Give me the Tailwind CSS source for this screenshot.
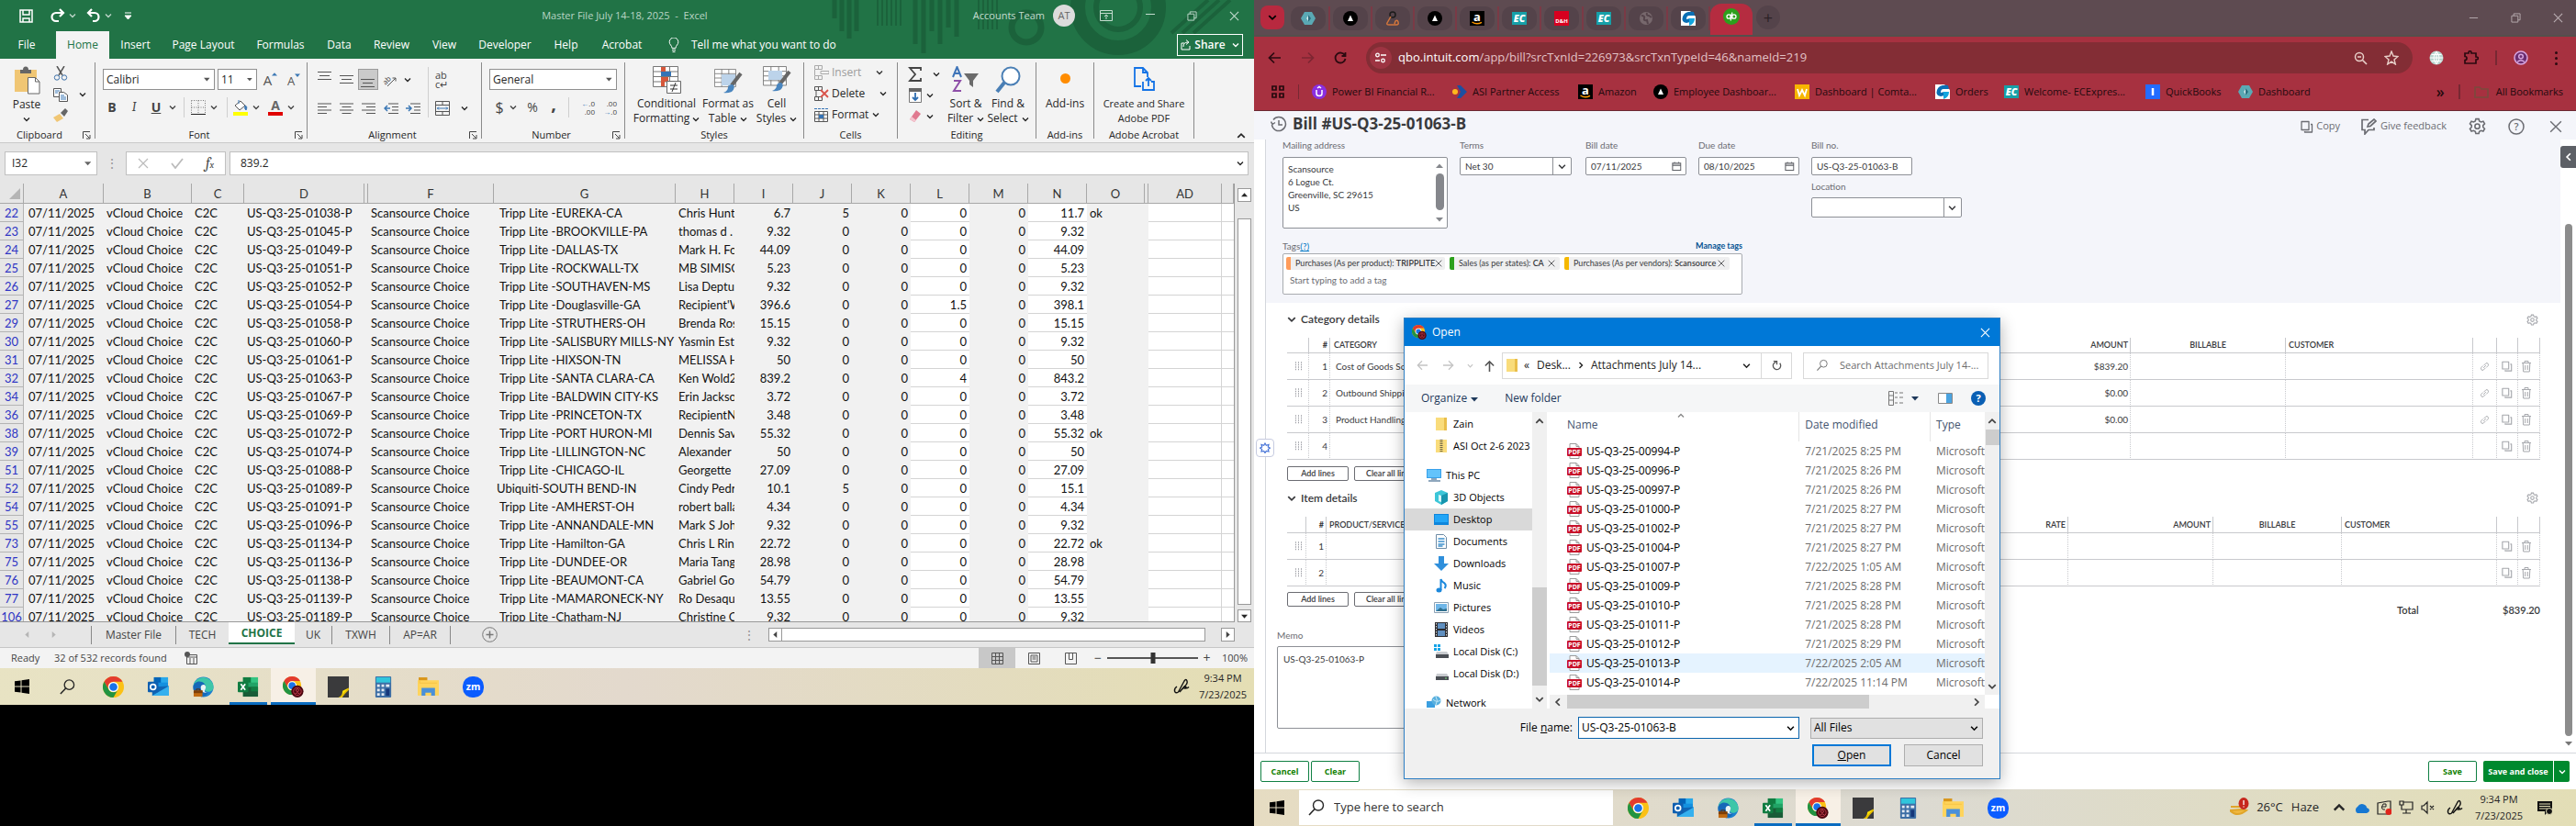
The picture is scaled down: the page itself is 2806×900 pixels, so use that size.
<!DOCTYPE html>
<html lang="en">
<head>
<meta charset="utf-8">
<title>Workspace</title>
<script src="https://cdn.jsdelivr.net/npm/@tailwindcss/browser@4"></script>
</head>
<body class="bg-black font-['Open_Sans',sans-serif] text-xs text-[#262626]">

<!-- Shared icon definitions -->
<svg class="hidden" aria-hidden="true">
  <symbol id="chev" viewBox="0 0 8 8"><path d="M1 2.5 4 5.5 7 2.5" fill="none" stroke="currentColor" stroke-width="1.4"/></symbol>
  <symbol id="tri" viewBox="0 0 8 8"><path d="M0 2h8L4 6.500z" fill="currentColor"/></symbol>
  <symbol id="x" viewBox="0 0 12 12"><path d="M1 1l10 10M11 1 1 11" fill="none" stroke="currentColor" stroke-width="1.2"/></symbol>
  <symbol id="launch" viewBox="0 0 9 9"><path d="M.5 8V.5H8M3 3l4.500 4.500M8 4v4H4" fill="none" stroke="#444"/></symbol>
  <symbol id="restore" viewBox="0 0 12 12"><path d="M1 3.500h7.500V11H1zM3.500 3.500V1H11v7.500H8.500" fill="none" stroke="currentColor"/></symbol>
  <symbol id="glass" viewBox="0 0 20 20"><circle cx="12" cy="7.500" r="5.500" fill="none" stroke="currentColor" stroke-width="1.400"/><path d="M8 11.500 2 18" stroke="currentColor" stroke-width="1.600"/></symbol>
  <symbol id="gear" viewBox="0 0 24 24"><path d="M10 2h4l.8 3 2.300 1.200 3-.9 2 3.400-2.200 2.200v2.400l2.200 2.200-2 3.400-3-.9-2.300 1.200-.8 3h-4l-.8-3-2.300-1.200-3 .9-2-3.400 2.200-2.200v-2.400L1.900 8.700l2-3.400 3 .9L9.200 5z" fill="none" stroke="currentColor" stroke-width="2"/><circle cx="12" cy="12.200" r="3.300" fill="none" stroke="currentColor" stroke-width="2"/></symbol>
  <symbol id="copy" viewBox="0 0 14 14"><path d="M1 1.500h8v9H1zM11 4.500h1.500v8.500H4.500v-1" fill="none" stroke="currentColor" stroke-width="1.300" stroke-linejoin="round"/></symbol>
  <symbol id="trash" viewBox="0 0 12 14"><path d="M1 3.500h10M4 3V1.500h4V3M2.200 4l.5 9h6.600l.5-9M4.700 6v5M7.300 6v5" fill="none" stroke="currentColor"/></symbol>
  <symbol id="link" viewBox="0 0 12 12"><path d="M5 4.500 7.500 2a2 2 0 0 1 2.700 2.700L8 7M7 7.500 4.500 10a2 2 0 0 1-2.700-2.700L4 5M4.500 7.500l3-3" fill="none" stroke="currentColor"/></symbol>
  <symbol id="dots" viewBox="0 0 9 10"><path d="M1 1h1M4 1h1M7 1h1M1 3.500h1M4 3.500h1M7 3.500h1M1 6h1M4 6h1M7 6h1M1 8.500h1M4 8.500h1M7 8.500h1" stroke="#9b9ca3" stroke-width="1.300"/></symbol>
  <symbol id="cal" viewBox="0 0 12 12"><path d="M1 2.500h10V11H1zM1 5h10M3.500 1v2M8.500 1v2" fill="none" stroke="#5f6167" stroke-width="1.200"/></symbol>
  <symbol id="win" viewBox="0 0 16 16"><path d="M0 2.300 6.500 1.400v6.100H0zM7.500 1.300 16 0v7.500H7.500zM0 8.500h6.500v6.100L0 13.700zM7.500 8.500H16V16l-8.500-1.200z" fill="#000"/></symbol>
  <symbol id="chrome" viewBox="0 0 24 24"><circle cx="12" cy="12" r="12" fill="#fbc116"/><path d="M12 0A12 12 0 0 0 1.600 6l5.200 9A6 6 0 0 1 12 6h10.400A12 12 0 0 0 12 0z" fill="#e33b2e"/><path d="M1.600 6A12 12 0 0 0 12 24l5.200-9A6 6 0 0 1 6.800 15z" fill="#229342"/><circle cx="12" cy="12" r="5.800" fill="#fff"/><circle cx="12" cy="12" r="4.500" fill="#1a73e8"/></symbol>
  <symbol id="chrome2" viewBox="0 0 26 26"><use href="#chrome" width="23" height="23"/><circle cx="18" cy="18.500" r="7.500" fill="#4d0710"/><circle cx="18" cy="18.500" r="4.800" fill="none" stroke="#c5404e"/><circle cx="18" cy="17" r="1.700" fill="none" stroke="#c5404e"/><path d="M15 21.500q3-3 6 0" fill="none" stroke="#c5404e"/></symbol>
  <symbol id="outlook" viewBox="0 0 24 24"><path d="M7 1h16v12H7z" fill="#1490df"/><path d="M7 1h8v6H7z" fill="#0364b8"/><path d="M15 1h8v6h-8z" fill="#28a8ea"/><path d="M5 12l19-1v11H5z" fill="#1066b5"/><path d="M5 22 24 11v11z" fill="#35b0ee"/><rect y="6" width="12" height="12" rx="1" fill="#0f5fb0"/><circle cx="6" cy="12" r="3" fill="none" stroke="#fff" stroke-width="1.800"/></symbol>
  <symbol id="edge" viewBox="0 0 24 24"><circle cx="12" cy="12" r="11.500" fill="#1b7fd0"/><path d="M.6 11A11.500 11.500 0 0 1 23.500 12c0 4-3 5.500-6 5.500-2.500 0-4-1-3.500-2 2-3 0-6-4-6-4 0-8 1-9.400 1.500z" fill="#3ec6a8"/><path d="M.6 11C3 4 10 5 13 8c2 2 2 5 .5 7-1 2 1 3 4 3-2 4-6 5.500-9 5C3 21.500 0 17 .6 11z" fill="#1668b8"/><path d="M9 12q1-3 4-2.500 3 2 1 5.500-2 3 3 3l-3 .5Q9 18 9 12z" fill="#eaf4f4"/><path d="M1 16h10v7H1z" fill="#c06a12"/><path d="M1 16h10v3H1z" fill="#7d3f08"/><path d="M4 16v-1.500h4V16" fill="none" stroke="#5c2c04"/></symbol>
  <symbol id="excel" viewBox="0 0 24 24"><path d="M6 1h17v22H6z" fill="#21a366"/><path d="M6 1h9v6H6z" fill="#107c41"/><path d="M15 1h8v6h-8z" fill="#33c481"/><path d="M6 12h17v11H6z" fill="#185c37"/><path d="M15 12h8v5h-8z" fill="#107c41"/><rect y="6" width="12" height="12" rx="1" fill="#107c41"/><path d="M3.500 8.500l5 7M8.500 8.500l-5 7" stroke="#fff" stroke-width="1.800"/></symbol>
  <symbol id="notes" viewBox="0 0 22 22"><path d="M0 0h22v22H0z" fill="#3a3a3c"/><path d="M11 22q4-1 4.500-7Q18 14 22 12l-7 10z" fill="#ffe100"/><path d="M12 22l10-10v2l-8 8z" fill="#e0b800"/></symbol>
  <symbol id="calc" viewBox="0 0 18 24"><rect width="18" height="24" rx="1" fill="#3d6ea5"/><path d="M1 1h16v6H1z" fill="#30c5dc"/><path d="M2 9h3v3H2zM7 9h3v3H7zM12 9h4v3h-4zM2 14h3v3H2zM7 14h3v3H7zM2 19h3v3H2zM7 19h3v3H7z" fill="#e4eaf2"/><path d="M12 14h4v8h-4z" fill="#16377a"/></symbol>
  <symbol id="folder" viewBox="0 0 22 20"><path d="M1 0h9v4H1z" fill="#d9961a"/><path d="M0 3h22v16H0z" fill="#ffd45c"/><path d="M4 19v-8h14v8h-4v-3H8v3z" fill="#4a90d9"/><path d="M2 3v3h18" fill="none" stroke="#f6c445"/></symbol>
  <symbol id="zoomapp" viewBox="0 0 24 24"><rect width="24" height="24" rx="11" fill="#0b5cff"/><text x="12" y="16" text-anchor="middle" font-family="Open Sans" font-weight="700" font-size="11" fill="#fff">zm</text></symbol>
  <symbol id="pen" viewBox="0 0 18 18"><path d="M4 9q-3 2-2.500 5 1 3 4 1L12 3q2-3 3 0t-3 6l-5 6q4-5 6-6 2 0 0 2 3 0 4-1.500" fill="none" stroke="#111" stroke-width="1.400"/></symbol>
  <symbol id="amazon" viewBox="0 0 16 16"><path d="M0 0h16v16H0z" fill="#000"/><text x="8" y="11" text-anchor="middle" font-family="Open Sans" font-weight="700" font-size="13" fill="#fff">a</text><path d="M2.500 12q5 3.500 10.500.3" fill="none" stroke="#f90" stroke-width="1.400"/></symbol>
  <symbol id="ec" viewBox="0 0 16 16"><path d="M0 1h16v14H0z" fill="#16a0a8"/><text x="8" y="12" text-anchor="middle" font-family="Open Sans" font-style="italic" font-weight="800" font-size="10.500" fill="#fff">EC</text></symbol>
  <symbol id="tridisc" viewBox="0 0 16 16"><circle cx="8" cy="8" r="8" fill="#000"/><path d="M8 4.500l3 6.500H5z" fill="#fff"/></symbol>
  <symbol id="hex" viewBox="0 0 16 16"><path d="M4 1h8l4 7-4 7H4L0 8z" fill="#5aa9b4"/><path d="M8.500 4.500 11 8l-2.500 3.500L6 8z" fill="#2b6f80"/><path d="M8 5v6L6 8z" fill="#d5eef0"/></symbol>
  <symbol id="gg" viewBox="0 0 16 16"><path d="M0 0h10l6 6v10H0z" fill="#fff"/><path d="M14 1Q4 0 2 6t4 7l4-1V8l-4 1q0-4 3-4h6z" fill="#0a6fb5"/><path d="M9 8h6q0 6-6 8z" fill="#12a5df"/></symbol>
  <symbol id="pdf" viewBox="0 0 16 17"><path d="M3 .5h7l3 3v13H3z" fill="#fff" stroke="#9a9a9a"/><path d="M10 .5v3h3" fill="none" stroke="#9a9a9a"/><rect y="5" width="16" height="9" rx="1" fill="#c8102a"/><text x="8" y="12.300" text-anchor="middle" font-family="Open Sans" font-weight="700" font-size="7" fill="#fff">PDF</text></symbol>
  <symbol id="fold" viewBox="0 0 14 16"><path d="M1 1h12v14H1z" fill="#f9dc7b"/><path d="M10 1h3v14h-3z" fill="#e9be4b"/></symbol>
  <symbol id="zip" viewBox="0 0 14 16"><path d="M1 1h12v14H1z" fill="#f9dc7b"/><path d="M7 1v14" stroke="#6b6244" stroke-width="3" stroke-dasharray="1 1"/></symbol>
  <symbol id="pc" viewBox="0 0 16 16"><path d="M0 1h16v10H0z" fill="#38a1ea"/><path d="M1 2h14v8H1z" fill="#63c3fb"/><path d="M2 14h13M5 12h6" stroke="#6b8ba8" stroke-width="1.500"/></symbol>
  <symbol id="cube" viewBox="0 0 16 16"><path d="M8 0l7 3v9l-7 4-7-4V3z" fill="#3cc6d8"/><path d="M8 6l7-3v9l-7 4z" fill="#1795ae"/><path d="M5 5l3 1v7l-3-1z" fill="#d9f5f8"/></symbol>
  <symbol id="desk" viewBox="0 0 16 16"><path d="M0 2h16v12H0z" fill="#0f86dc"/><path d="M1 3h14v8H1z" fill="#23a6f7"/></symbol>
  <symbol id="doc" viewBox="0 0 16 16"><path d="M2.500.5h8l3 3v12h-11z" fill="#fff" stroke="#6d8ba5"/><path d="M4.500 5h7M4.500 8h7M4.500 11h7M4.500 13h5" stroke="#3b8fcc" stroke-width="1.400"/></symbol>
  <symbol id="down" viewBox="0 0 16 16"><path d="M5 0h6v8h5l-8 8-8-8h5z" fill="#2f8fdb"/></symbol>
  <symbol id="note" viewBox="0 0 16 16"><path d="M7.500 13V1q1 3 4 4.500Q14 8 11.500 11" fill="none" stroke="#1b88dc" stroke-width="2"/><ellipse cx="5.500" cy="13" rx="3" ry="2.500" fill="#1b88dc"/></symbol>
  <symbol id="pic" viewBox="0 0 16 16"><path d="M.5 2.500h15v11H.5z" fill="#fff" stroke="#8aa0b4"/><path d="M2 4h12v8H2z" fill="#6fb6e8"/><path d="M2 12l5-4 3 2 4-1v3z" fill="#2e6f8e"/></symbol>
  <symbol id="film" viewBox="0 0 16 16"><path d="M1 0h14v16H1z" fill="#2b2b2f"/><path d="M4 1h8v6H4zM4 9h8v6H4z" fill="#5f8fc0"/><path d="M2.500 1v15M13.500 1v15" stroke="#ddd" stroke-dasharray="1.500 1.500"/></symbol>
  <symbol id="disk" viewBox="0 0 16 16"><path d="M3 8h11l2 3H2z" fill="#c9ccd0"/><path d="M2 11h14v4H2z" fill="#4b4f55"/><path d="M12 13h2" stroke="#7ee07e"/></symbol>
  <symbol id="diskc" viewBox="0 0 16 16"><path d="M0 0h3v3H0zM4 0h3v3H4zM0 4h3v3H0zM4 4h3v3H4z" fill="#16a4e8"/><path d="M3 8h11l2 3H2z" fill="#c9ccd0"/><path d="M2 11h14v4H2z" fill="#4b4f55"/></symbol>
  <symbol id="net" viewBox="0 0 16 16"><path d="M0 6h9v7H0z" fill="#3b9fe0"/><circle cx="10.500" cy="5.500" r="5" fill="#5ab0de"/><path d="M7 4q4 4 8 1M10 1q3 4 0 9" fill="none" stroke="#bfe6f7"/><path d="M2 15h6" stroke="#577"/></symbol>
  <symbol id="lines-l" viewBox="0 0 16 12"><path d="M0 1h15M0 4.500h10M0 8h15M0 11.500h10" stroke="#555"/></symbol>
  <symbol id="lines-c" viewBox="0 0 16 12"><path d="M0 1h15M2.500 4.500h10M0 8h15M2.500 11.500h10" stroke="#555"/></symbol>
  <symbol id="lines-r" viewBox="0 0 16 12"><path d="M0 1h15M5 4.500h10M0 8h15M5 11.500h10" stroke="#555"/></symbol>
  <symbol id="lines3" viewBox="0 0 16 12"><path d="M0 1.500h15M2 5.500h11M0 9.500h15" stroke="#555"/></symbol>
  <symbol id="grid" viewBox="0 0 28 30"><path d="M.5.5h27v22H.5zM.5 6h27M.5 11.500h27M.5 17h27M9.500.5v22M18.500.5v22" fill="#fff" stroke="#777"/></symbol>
</svg>

<div class="grid min-h-screen grid-cols-[1366fr_1440fr]">

<!-- ============ Spreadsheet ============ -->
<section class="flex min-w-0 flex-col bg-black" aria-label="Spreadsheet">
  <header class="relative bg-[#217346] text-white">
    <svg class="absolute top-0 right-0 h-16 w-[460px] text-[#1b623b]" viewBox="0 0 460 64" aria-hidden="true"><g fill="none" stroke="currentColor"><path stroke-width="5" d="M3 0v20M11 0v34M19 0v42M27 0v34M91 0v48M100 0v58M109 0v34M118 0v48M127 0v30M136 0v40"/><path stroke-width="2" d="M50 0v28M55 0v28M60 0v28M65 0v28M70 0v28M75 0v28M160 0v32M165 0v32M170 0v32M175 0v32M180 0v32"/><circle cx="212" cy="30" r="16" stroke-width="7"/><circle cx="312" cy="8" r="44" stroke-width="16"/><circle cx="312" cy="8" r="24" stroke-width="6"/><path stroke-width="4" d="M370 36 410 0M382 36 422 0M394 36 434 0"/></g></svg>
    <div class="relative flex h-[34px] items-center pr-4 pl-[21px]">
      <div class="flex w-[130px] items-center">
        <button aria-label="Save" class="w-[28px]"><svg class="size-[15px]" viewBox="0 0 15 15"><path d="M1 1h13v13H1z" fill="none" stroke="#fff" stroke-width="1.500"/><path d="M4 1v5h7V1M4 14v-4h7v4" fill="none" stroke="#fff" stroke-width="1.500"/></svg></button>
        <button aria-label="Redo" class="w-[39px] whitespace-nowrap"><svg class="inline size-4" viewBox="0 0 16 16"><path d="M10 1l4 4-4 4M14 5H6a4 4 0 0 0 0 9h3" fill="none" stroke="#fff" stroke-width="2.200"/></svg><svg class="ml-1 inline size-2 opacity-70"><use href="#chev"/></svg></button>
        <button aria-label="Undo" class="w-[39px] whitespace-nowrap"><svg class="inline size-4" viewBox="0 0 16 16"><path d="M6 1 2 5l4 4M2 5h7a4 4 0 0 1 0 9H7" fill="none" stroke="#fff" stroke-width="2.200"/></svg><svg class="ml-1 inline size-2 opacity-70"><use href="#chev"/></svg></button>
        <button aria-label="Customize toolbar" class="ml-2 w-4"><svg class="size-[9px]" viewBox="0 0 9 9"><path d="M1 1h7M1 4h7L4.500 8z" fill="#fff" stroke="#fff"/></svg></button>
      </div>
      <p class="flex-1 pl-[150px] text-center text-[11px] whitespace-pre text-[#b9d5c5]">Master File July 14-18, 2025  -  Excel</p>
      <div class="flex items-center text-[#c4dccf]">
        <span class="text-[11px]">Accounts Team</span>
        <span class="ml-[9px] flex size-6 items-center justify-center rounded-full bg-[#dcdcdc] text-[11px] text-[#666]">AT</span>
        <button aria-label="Ribbon options" class="ml-[27px]"><svg class="h-3 w-[14px]" viewBox="0 0 14 12"><path d="M.5.5h13v11H.5zM.5 3.500h13M7 10V5M5 7l2-2 2 2" fill="none" stroke="currentColor"/></svg></button>
        <button aria-label="Minimize" class="ml-[35px]"><svg class="size-3" viewBox="0 0 12 12"><path d="M1 4.500h10" stroke="currentColor"/></svg></button>
        <button aria-label="Restore" class="ml-[34px]"><svg class="size-[11px]"><use href="#restore"/></svg></button>
        <button aria-label="Close" class="ml-[35px]"><svg class="size-[11px]"><use href="#x"/></svg></button>
      </div>
    </div>
    <nav class="relative flex h-[30px] items-stretch pr-3 text-xs" aria-label="Ribbon tabs">
      <button class="w-[61px] pr-[3px]">File</button>
      <button class="w-[58px] bg-[#f3f3f3] text-[#217346]">Home</button>
      <button class="w-[57px]">Insert</button>
      <button class="w-[91px]">Page Layout</button>
      <button class="w-[77px]">Formulas</button>
      <button class="w-[51px]">Data</button>
      <button class="w-[63px]">Review</button>
      <button class="w-[52px]">View</button>
      <button class="w-[80px]">Developer</button>
      <button class="w-[53px]">Help</button>
      <button class="w-[69px]">Acrobat</button>
      <button class="flex items-center pl-4"><svg class="mr-[13px] h-4 w-3" viewBox="0 0 12 16"><path d="M4 11.500q0-2-1.500-3.500a4.800 4.800 0 1 1 7 0Q8 9.500 8 11.500zM4 13.500h4M4.500 15.500h3" fill="none" stroke="#fff"/></svg>Tell me what you want to do</button>
      <button class="my-[3px] ml-auto flex w-[72px] items-center justify-center gap-[3px] border border-white font-semibold"><svg class="size-3" viewBox="0 0 12 12"><path d="M4 4H1v7h9V7M3 8q0-5 5-5M6 .5 9 3 6 5.500" fill="none" stroke="#fff"/></svg>Share<svg class="ml-1 size-2"><use href="#chev"/></svg></button>
    </nav>
  </header>

  <!-- Ribbon -->
  <div class="flex h-[92px] border-b border-[#c9c9c9] bg-[#f3f3f3] leading-4">
    <div class="flex w-[103px] flex-col">
      <div class="flex h-[76px] items-start pt-2">
        <button class="flex w-[58px] flex-col items-center"><svg class="h-[31px] w-[29px]" viewBox="0 0 29 31"><path d="M1 4h24v24H1z" fill="#f0c674"/><path d="M7 4h3q0-3.500 3-3.500T16 4h3v4H7z" fill="#666"/><path d="M15.500 12.500h8l4.500 4.500v13H15.500z" fill="#fff" stroke="#666"/><path d="M23.500 12.500V17H28" fill="none" stroke="#666"/></svg><span class="mt-[3px]">Paste</span><svg class="mt-1 size-2"><use href="#chev"/></svg></button>
        <div class="flex flex-col gap-[7px]">
          <button aria-label="Cut"><svg class="size-4" viewBox="0 0 16 16"><path d="M4 0l6 10M12 0 6 10" stroke="#555" stroke-width="1.500"/><circle cx="4" cy="12.500" r="2.700" fill="none" stroke="#3c6fa8"/><circle cx="12" cy="12.500" r="2.700" fill="none" stroke="#3c6fa8"/></svg></button>
          <button aria-label="Copy" class="flex items-center gap-3"><svg class="size-4" viewBox="0 0 16 16"><path d="M.5 1.500h8v9h-8z" fill="#fff" stroke="#555"/><path d="M6.500 5.500h5l4 3v7h-9z" fill="#fff" stroke="#555"/><path d="M2 4h5M2 6h3M8 9h4M8 11h6M8 13h6" stroke="#3c78b5"/></svg><svg class="size-2"><use href="#chev"/></svg></button>
          <button aria-label="Format Painter"><svg class="size-4" viewBox="0 0 16 16"><path d="M0 10l7-4 4 5-7 4z" fill="#f0c674"/><path d="M8 5l5-5 3 3-4 6z" fill="#666"/></svg></button>
        </div>
      </div>
      <div class="flex items-center justify-between pr-1 pl-[18px] text-[11px]">Clipboard<svg class="size-[9px]"><use href="#launch"/></svg></div>
    </div>
    <div class="my-1 w-px bg-[#8a8a8a]"></div>

    <div class="flex w-[230px] flex-col">
      <div class="h-[76px] pt-[11px]">
        <div class="flex h-[23px] items-stretch pl-2">
          <label class="flex w-[122px] items-center border border-[#8f8f8f] bg-white pr-1"><input aria-label="Font" class="w-full min-w-0 pl-[3px] outline-none" value="Calibri"><svg class="size-[7px] text-[#555]"><use href="#tri"/></svg></label>
          <label class="ml-[3px] flex w-[43px] items-center border border-[#8f8f8f] bg-white pr-1"><input aria-label="Font size" class="w-full min-w-0 pl-[3px] outline-none" value="11"><svg class="size-[7px] text-[#555]"><use href="#tri"/></svg></label>
          <button aria-label="Grow font" class="ml-[2px] flex w-[25px] items-center justify-center text-[15px] text-[#555]">A<svg class="mb-3 size-[6px] rotate-180 text-[#3c78b5]"><use href="#tri"/></svg></button>
          <button aria-label="Shrink font" class="flex w-[26px] items-center justify-center pt-[2px] text-[13px] text-[#555]">A<svg class="mb-3 size-[6px] text-[#3c78b5]"><use href="#tri"/></svg></button>
        </div>
        <div class="mt-2 flex h-[22px] items-center pl-[6px] text-sm text-[#444]">
          <button class="w-6 font-bold">B</button><button class="w-6 font-serif italic">I</button><button class="w-6 font-bold underline">U</button>
          <svg class="mx-[2px] size-2"><use href="#chev"/></svg><span class="mx-[6px] h-full w-px bg-[#cfcfcf]"></span>
          <button aria-label="Borders"><svg class="ml-px size-4" viewBox="0 0 16 16"><path d="M.5.5v15M8 .5v15M15.500.5v15M.5.5h15M.5 8h15" stroke="#777" stroke-dasharray="1 1.500"/><path d="M0 15.500h16" stroke="#222"/></svg></button>
          <svg class="mx-[5px] size-2"><use href="#chev"/></svg><span class="mx-[5px] h-full w-px bg-[#cfcfcf]"></span>
          <button aria-label="Fill color"><svg class="h-[18px] w-[17px]" viewBox="0 0 17 18"><path d="M3 7l6-5 5 5-6 5z" fill="#fff" stroke="#555"/><path d="M7 5V1M14 7q3 1 1 5-2-1-1-5" fill="#3c78b5" stroke="#3c78b5"/><path d="M1 14h16v4H1z" fill="#ffff00"/></svg></button>
          <svg class="mx-[5px] size-2"><use href="#chev"/></svg>
          <button aria-label="Font color" class="ml-1 w-4 border-b-4 border-[#e00000] leading-[14px] font-bold text-[#666]">A</button>
          <svg class="mx-[5px] size-2"><use href="#chev"/></svg>
        </div>
      </div>
      <div class="flex items-center justify-between pr-1 text-[11px]"><span class="w-[9px]"></span>Font<svg class="size-[9px]"><use href="#launch"/></svg></div>
    </div>
    <div class="my-1 w-px bg-[#8a8a8a]"></div>

    <div class="flex w-[189px] flex-col">
      <div class="flex h-[76px] pt-[9px]">
        <div class="w-[131px]">
          <div class="flex h-[27px] items-center pl-[7px]">
            <button aria-label="Top align" class="w-6 pb-2 pl-1"><svg class="h-3 w-4"><use href="#lines3"/></svg></button>
            <button aria-label="Middle align" class="w-6 pl-1"><svg class="h-3 w-4"><use href="#lines3"/></svg></button>
            <button aria-label="Bottom align" class="h-[23px] w-[22px] border border-[#9a9a9a] bg-[#cacaca] pt-2 pl-[2px]"><svg class="h-3 w-4"><use href="#lines3"/></svg></button>
            <button aria-label="Orientation" class="w-6 pl-1"><svg class="size-4" viewBox="0 0 16 16"><text x="1" y="11" font-size="8" fill="#444" transform="rotate(-45 6 9)">ab</text><path d="M6 15 15 6M11.500 6H15v3.500" fill="none" stroke="#555"/></svg></button>
            <svg class="ml-1 size-2"><use href="#chev"/></svg>
          </div>
          <div class="mt-2 flex h-[20px] items-center pl-[11px]">
            <button aria-label="Align left" class="w-6"><svg class="h-3 w-4"><use href="#lines-l"/></svg></button>
            <button aria-label="Center" class="w-6"><svg class="h-3 w-4"><use href="#lines-c"/></svg></button>
            <button aria-label="Align right" class="w-6"><svg class="h-3 w-4"><use href="#lines-r"/></svg></button>
            <button aria-label="Decrease indent" class="w-6"><svg class="h-3 w-4" viewBox="0 0 16 12"><path d="M5 1h11M9 4.500h7M9 8h7M5 11.500h11" stroke="#555"/><path d="M1 6h6M4 3 1 6l3 3" fill="none" stroke="#3c78b5" stroke-width="1.500"/></svg></button>
            <button aria-label="Increase indent" class="w-6"><svg class="h-3 w-4" viewBox="0 0 16 12"><path d="M5 1h11M9 4.500h7M9 8h7M5 11.500h11" stroke="#555"/><path d="M0 6h6M3 3l3 3-3 3" fill="none" stroke="#3c78b5" stroke-width="1.500"/></svg></button>
          </div>
        </div>
        <span class="h-[55px] w-px bg-[#cfcfcf]"></span>
        <div class="flex flex-col pl-[7px]">
          <button aria-label="Wrap text" class="h-[27px] text-left text-[11px] leading-[10px] text-[#444]">ab<br>c↵</button>
          <button aria-label="Merge and center" class="mt-2 flex h-5 items-center gap-3"><svg class="size-4" viewBox="0 0 16 16"><path d="M.5.5h15v15H.5zM.5 4.500h15M.5 11.500h15M8 .5v4M8 11.500v4" fill="none" stroke="#555"/><path d="M2 8h12M4 6.500 2.500 8 4 9.500M12 6.500 13.500 8 12 9.500" fill="none" stroke="#3c78b5"/></svg><svg class="size-2"><use href="#chev"/></svg></button>
        </div>
      </div>
      <div class="flex items-center justify-between pr-1 text-[11px]"><span class="w-[9px]"></span>Alignment<svg class="size-[9px]"><use href="#launch"/></svg></div>
    </div>
    <div class="my-1 w-px bg-[#8a8a8a]"></div>

    <div class="flex w-[155px] flex-col">
      <div class="h-[76px] px-2 pt-[11px]">
        <label class="flex h-[23px] items-center border border-[#8f8f8f] bg-white pr-1"><input aria-label="Number format" class="w-full min-w-0 pl-[3px] outline-none" value="General"><svg class="size-[7px] text-[#555]"><use href="#tri"/></svg></label>
        <div class="mt-2 flex h-[22px] items-center text-base text-[#444]">
          <button class="w-[22px]">$</button><svg class="size-2"><use href="#chev"/></svg><button class="w-[34px] text-sm">%</button><button class="w-3 pb-2 text-xl leading-none font-bold">,</button><span class="mx-[10px] h-full w-px bg-[#cfcfcf]"></span>
          <button class="w-[18px] text-right text-[8px] leading-[9px]" aria-label="Increase decimal"><span class="text-[#3c78b5]">←</span>.0<br>.00</button><button class="ml-[6px] w-[18px] text-right text-[8px] leading-[9px]" aria-label="Decrease decimal">.00<br><span class="text-[#3c78b5]">→</span>.0</button>
        </div>
      </div>
      <div class="flex items-center justify-between pr-1 text-[11px]"><span class="w-[9px]"></span>Number<svg class="size-[9px]"><use href="#launch"/></svg></div>
    </div>
    <div class="my-1 w-px bg-[#8a8a8a]"></div>

    <div class="flex w-[194px] flex-col">
      <div class="flex h-[76px] items-start pt-2 pl-2 whitespace-nowrap">
        <button class="flex w-[74px] flex-col items-center"><svg class="h-[30px] w-[31px]" viewBox="0 0 31 30"><use href="#grid" width="28" height="30"/><path d="M9 1h5v5H9zM9 12h8v5H9zM9 17h4v5H9z" fill="#d6573a"/><path d="M9 6h11v5H9z" fill="#3573b5"/><path d="M15.500 16.500h15v13h-15z" fill="#fff" stroke="#666"/><path d="M19 21h8M19 25h8M25 18l-4 10" stroke="#333"/></svg><span class="mt-[3px]">Conditional</span><span>Formatting<svg class="ml-[3px] inline size-2"><use href="#chev"/></svg></span></button>
        <button class="flex w-[60px] flex-col items-center"><svg class="h-[30px] w-[31px]" viewBox="0 0 31 30"><use href="#grid" y="3" width="24" height="26"/><path d="M8 9h15v12H8z" fill="#bcd3ea"/><path d="M29 8 19 21" stroke="#666" stroke-width="4"/><path d="M20 20q4 3-1 8-5 2-9 1 5-2 5-6 1-3 5-3z" fill="#4a86bf"/></svg><span class="mt-[3px]">Format as</span><span>Table<svg class="ml-1 inline size-2"><use href="#chev"/></svg></span></button>
        <button class="flex w-[46px] flex-col items-center"><svg class="h-[30px] w-[31px]" viewBox="0 0 31 30"><use href="#grid" y="0" width="26" height="28"/><path d="M6 5h15v10H6z" fill="#bcd3ea"/><path d="M29 6 19 19" stroke="#666" stroke-width="4"/><path d="M20 18q4 3-1 8-5 2-9 1 5-2 5-6 1-3 5-3z" fill="#4a86bf"/></svg><span class="mt-[3px]">Cell</span><span>Styles<svg class="ml-1 inline size-2"><use href="#chev"/></svg></span></button>
      </div>
      <div class="text-center text-[11px]">Styles</div>
    </div>
    <div class="my-1 w-px bg-[#8a8a8a]"></div>

    <div class="flex w-[101px] flex-col">
      <div class="flex h-[76px] flex-col gap-[7px] pt-[7px] pl-[11px]">
        <button class="flex items-center text-[#9c9c9c]"><svg class="mr-[3px] size-4" viewBox="0 0 16 16"><path d="M.5.5h8v4h-8zM.5 11.500h8v4h-8zM4.500.5v4M4.500 11.500v4M.5 5v6M7 6.500h9v3H7z" fill="none" stroke="#aaa"/></svg>Insert<svg class="ml-4 size-2 text-[#333]"><use href="#chev"/></svg></button>
        <button class="flex items-center"><svg class="mr-[3px] size-4" viewBox="0 0 16 16"><path d="M.5.5h8v4h-8zM.5 11.500h8v4h-8zM4.500.5v4M4.500 11.500v4M2 5v6" fill="none" stroke="#555"/><path d="M7 4l8 8M15 4l-8 8" stroke="#d9534a" stroke-width="1.800"/></svg>Delete<svg class="ml-4 size-2"><use href="#chev"/></svg></button>
        <button class="flex items-center"><svg class="mr-[3px] size-4" viewBox="0 0 16 16"><path d="M.5 4.500h14v11H.5zM.5 8h14M.5 12h14M5 4.500v11M10 4.500v11" fill="#fff" stroke="#555"/><path d="M5 8h5v4H5z" fill="#3573b5"/><path d="M0 1.500h15" stroke="#3573b5" stroke-dasharray="3 1"/></svg>Format<svg class="ml-1 size-2"><use href="#chev"/></svg></button>
      </div>
      <div class="text-center text-[11px]">Cells</div>
    </div>
    <div class="my-1 w-px bg-[#8a8a8a]"></div>

    <div class="flex w-[150px] flex-col">
      <div class="flex h-[76px] items-start pt-2">
        <div class="flex w-[52px] flex-col gap-[7px] pt-px pl-[11px]">
          <button aria-label="AutoSum" class="flex items-center gap-[11px]"><svg class="size-4" viewBox="0 0 16 16"><path d="M14 4V1H2l6 7-6 7h12v-3" fill="none" stroke="#444" stroke-width="1.800"/></svg><svg class="size-2"><use href="#chev"/></svg></button>
          <button aria-label="Fill" class="flex items-center gap-1"><svg class="size-4" viewBox="0 0 16 16"><path d="M1.500.5h13v15h-13z" fill="#fff" stroke="#777"/><path d="M1 0h14v4H1z" fill="#666"/><path d="M8 5v8M5 10l3 3 3-3" fill="none" stroke="#2e6db0" stroke-width="1.800"/></svg><svg class="size-2"><use href="#chev"/></svg></button>
          <button aria-label="Clear" class="flex items-center gap-1"><svg class="size-4" viewBox="0 0 16 16"><path d="M9 1l5 4-7 9-5-3z" fill="#e0798f"/><path d="M2 11l2-3 5 4-2 2z" fill="#f4c5cf"/></svg><svg class="size-2"><use href="#chev"/></svg></button>
        </div>
        <button class="flex w-[44px] flex-col items-center whitespace-nowrap"><svg class="h-[30px] w-[30px]" viewBox="0 0 30 30"><path d="M1 12 5.500 1 10 12M3 8h5" fill="none" stroke="#3f74b8" stroke-width="2"/><path d="M2 16h7L2 27h8" fill="none" stroke="#8e4fa8" stroke-width="2"/><path d="M13 8h16l-6 8v7l-4-3v-4z" fill="#6b6b6b"/></svg><span class="mt-[3px]">Sort &amp;</span><span>Filter<svg class="ml-1 inline size-2"><use href="#chev"/></svg></span></button>
        <button class="flex w-[48px] flex-col items-center whitespace-nowrap"><svg class="h-[30px] w-[28px]" viewBox="0 0 28 30"><circle cx="17" cy="11" r="9.500" fill="#fff" stroke="#4a7fb5" stroke-width="2"/><path d="M10 18 2 28" stroke="#4a7fb5" stroke-width="4"/></svg><span class="mt-[3px]">Find &amp;</span><span>Select<svg class="ml-1 inline size-2"><use href="#chev"/></svg></span></button>
      </div>
      <div class="text-center text-[11px]">Editing</div>
    </div>
    <div class="my-1 w-px bg-[#8a8a8a]"></div>

    <div class="flex w-[62px] flex-col items-center">
      <button class="flex h-[76px] flex-col items-center pt-4"><span class="block size-[11px] rounded-full bg-[#ff8c00]"></span><span class="mt-[14px]">Add-ins</span></button>
      <div class="text-[11px]">Add-ins</div>
    </div>
    <div class="my-1 w-px bg-[#8a8a8a]"></div>

    <div class="flex w-[108px] flex-col items-center">
      <button class="flex h-[76px] flex-col items-center pt-[9px] text-[11px]"><svg class="h-[27px] w-6" viewBox="0 0 24 27"><path d="M9 21H2V1h9l5 5v5M11 1v5h5M11 16v9h12v-9h-3M17 21V12M14 15l3-3 3 3" fill="none" stroke="#1473e6" stroke-width="1.800"/></svg><span class="mt-[5px]">Create and Share</span><span>Adobe PDF</span></button>
      <div class="text-[11px]">Adobe Acrobat</div>
    </div>
    <div class="my-1 w-px bg-[#8a8a8a]"></div>
    <button aria-label="Collapse ribbon" class="mt-auto mr-[9px] mb-[2px] ml-auto"><svg class="size-[10px] rotate-180"><use href="#chev"/></svg></button>
  </div>

  <!-- Formula bar -->
  <div class="flex h-11 items-center bg-[#e6e6e6] pr-[6px] pl-[5px]">
    <label class="flex h-[26px] w-[101px] items-center border border-[#c0c0c0] bg-white pr-[6px]"><input aria-label="Name box" class="w-full min-w-0 pl-[7px] outline-none" value="I32"><svg class="size-2 text-[#666]"><use href="#tri"/></svg></label>
    <span class="w-[31px] text-center text-sm text-[#999]">⋮</span>
    <div class="flex h-[26px] w-[109px] items-center justify-around border border-[#c0c0c0] bg-white text-[#bbb]">
      <button aria-label="Cancel entry"><svg class="size-3"><use href="#x"/></svg></button>
      <button aria-label="Enter"><svg class="h-3 w-[14px]" viewBox="0 0 14 12"><path d="M1 6l4 5 8-10" fill="none" stroke="currentColor" stroke-width="1.800"/></svg></button>
      <button class="font-serif text-base text-[#444] italic">f<span class="text-[10px]">x</span></button>
    </div>
    <label class="ml-1 flex h-[26px] flex-1 items-center border border-[#c0c0c0] bg-white pr-1"><input aria-label="Formula" class="w-full min-w-0 pl-[11px] outline-none" value="839.2"><svg class="size-2"><use href="#chev"/></svg></label>
  </div>

  <!-- Sheet -->
  <div class="flex h-[478px] bg-[#e6e6e6]">
    <div class="min-w-0 flex-1 overflow-hidden border-r border-b border-[#999]">
      <table class="w-full table-fixed border-separate border-spacing-0 font-[Lato,sans-serif] text-[13px] leading-[18px] text-[#111]">
        <colgroup><col class="w-[26px]"><col class="w-[87px]"><col class="w-[96px]"><col class="w-[57px]"><col class="w-[131px]"><col class="w-[4px]"><col class="w-[137px]"><col class="w-[198px]"><col class="w-[64px]"><col class="w-[64px]"><col class="w-[64px]"><col class="w-[64px]"><col class="w-[64px]"><col class="w-[64px]"><col class="w-[64px]"><col class="w-[63px]"><col class="w-[4px]"><col class="w-[80px]"><col></colgroup>
        <thead><tr id="cols" class="h-[22px] bg-[#e6e6e6] text-[#333]"></tr></thead>
        <tbody id="rows"></tbody>
      </table>
    </div>
    <div class="flex w-[21px] flex-col items-center pt-[5px]" aria-hidden="true">
      <span class="flex h-[15px] w-[15px] items-center justify-center border border-[#999] bg-white"><svg class="size-[7px] rotate-180"><use href="#tri"/></svg></span>
      <span class="mt-[18px] w-[15px] flex-1 border border-[#999] bg-white"></span>
      <span class="mt-[5px] flex h-[14px] w-[15px] items-center justify-center border border-[#999] bg-white"><svg class="size-[7px]"><use href="#tri"/></svg></span>
    </div>
  </div>

  <!-- Sheet tabs -->
  <div class="flex h-[28px] items-center border-b border-[#c6c6c6] bg-[#e6e6e6] pr-[21px] text-xs text-[#444]">
    <div class="flex h-5 w-[100px] items-center gap-[22px] border-r border-[#888] pl-[26px] text-[#b5b5b5]"><svg class="size-[7px] rotate-90"><use href="#tri"/></svg><svg class="size-[7px] -rotate-90"><use href="#tri"/></svg></div>
    <button class="h-5 w-[92px] border-r border-[#888]">Master File</button>
    <button class="h-5 w-[57px]">TECH</button>
    <button class="h-6 w-[72px] self-start border-b-2 border-[#217346] bg-white pt-px font-bold text-[#217346]">CHOICE</button>
    <button class="h-5 w-[41px] border-r border-[#888]">UK</button>
    <button class="h-5 w-[63px] border-r border-[#888]">TXWH</button>
    <button class="h-5 w-[66px] border-r border-[#888]">AP=AR</button>
    <button aria-label="New sheet" class="ml-[34px]"><svg class="size-[17px]" viewBox="0 0 17 17"><circle cx="8.500" cy="8.500" r="7.800" fill="none" stroke="#777"/><path d="M4.500 8.500h8M8.500 4.500v8" stroke="#777" stroke-width="1.500"/></svg></button>
    <span class="ml-auto pr-[14px] text-sm text-[#999]">⋮</span>
    <div class="flex h-[15px] w-[508px]" aria-hidden="true">
      <span class="flex w-[15px] items-center justify-center border border-[#999] bg-white"><svg class="size-[7px] rotate-90"><use href="#tri"/></svg></span>
      <span class="flex-1 border border-l-0 border-[#999] bg-white"></span>
      <span class="ml-[17px] flex w-[15px] items-center justify-center border border-[#999] bg-white"><svg class="size-[7px] -rotate-90"><use href="#tri"/></svg></span>
    </div>
  </div>

  <!-- Status bar -->
  <div class="flex h-[22px] items-center bg-[#f3f3f3] pr-[7px] pl-3 text-[11px] text-[#444]">
    <span class="w-[47px]">Ready</span><span class="w-[142px]">32 of 532 records found</span>
    <svg class="size-[14px]" viewBox="0 0 14 14"><path d="M2.500 3.500h11v10h-11zM2.500 6h11M5 8h2M9 8h2M5 10h2M9 10h2M5 12h2M9 12h2" fill="none" stroke="#555"/><circle cx="3" cy="3" r="3" fill="#555"/></svg>
    <div class="ml-auto flex h-full items-center">
      <button aria-label="Normal view" class="flex h-full w-10 items-center justify-center bg-[#c8c8c8]"><svg class="size-[13px]" viewBox="0 0 13 13"><path d="M.5.5h12v12H.5zM.5 4.500h12M.5 8.500h12M4.500.5v12M8.500.5v12" fill="none" stroke="#555"/></svg></button>
      <button aria-label="Page layout" class="flex w-10 justify-center"><svg class="size-[13px]" viewBox="0 0 13 13"><path d="M.5.5h12v12H.5zM3 3h7v7H3zM4.500 5h4M4.500 7h4" fill="none" stroke="#555"/></svg></button>
      <button aria-label="Page break preview" class="flex w-10 justify-center"><svg class="size-[13px]" viewBox="0 0 13 13"><path d="M.5.5h12v12H.5zM4.500.5v7h4v-7" fill="none" stroke="#555"/></svg></button>
      <button class="w-5 text-center text-sm">−</button>
      <span class="relative h-3 w-[99px]"><span class="mt-[5px] block h-[2px] bg-[#555]"></span><span class="absolute top-0 left-1/2 h-3 w-[5px] -translate-x-1/2 bg-[#333]"></span></span>
      <button class="w-[19px] text-center text-sm">+</button>
      <span class="pl-[7px]">100%</span>
    </div>
  </div>

  <footer class="flex h-10 items-center bg-linear-to-r from-[#e8e3c3] via-[#e3d9cd] to-[#e4deb4] pr-[6px]">
    <button aria-label="Start" class="flex w-12 justify-center"><svg class="size-4"><use href="#win"/></svg></button>
    <button aria-label="Search" class="flex w-[51px] justify-center"><svg class="size-[19px]"><use href="#glass"/></svg></button>
    <div data-apps class="flex h-full"></div>
    <svg class="ml-auto size-[18px]"><use href="#pen"/></svg>
    <p class="w-[64px] pl-2 text-center text-[11px] leading-[18px] whitespace-nowrap">9:34 PM<br>7/23/2025</p>
  </footer>
</section>

<!-- ============ Browser ============ -->
<section class="relative flex min-w-0 flex-col bg-white" aria-label="Browser">
  <header>
    <div class="flex h-10 items-center border-b-2 border-[#54504c] bg-[#5e4b51] pr-[14px] pl-[7px]">
      <button aria-label="Search tabs" class="flex h-[26px] w-[26px] items-center justify-center rounded-lg bg-[#b8293f] text-black"><svg class="size-[10px]"><use href="#chev"/></svg></button>
      <div id="tabs" class="flex h-full items-end pl-[4px]"></div>
      <button aria-label="New tab" class="ml-1 flex size-[26px] items-center justify-center rounded-full bg-[#54434a] text-lg text-[#2c2226]">+</button>
      <div class="ml-auto flex items-center gap-[35px] text-[#b9aeb1]">
        <button aria-label="Minimize"><svg class="size-[11px]" viewBox="0 0 12 12"><path d="M1 6h10" stroke="currentColor"/></svg></button>
        <button aria-label="Restore"><svg class="size-[11px]"><use href="#restore"/></svg></button>
        <button aria-label="Close"><svg class="size-[11px]"><use href="#x"/></svg></button>
      </div>
    </div>
    <div class="flex h-[46px] items-center bg-[#a73140] pr-[14px] text-[#2b0a10]">
      <button aria-label="Back" class="flex w-[44px] justify-center"><svg class="size-[14px]" viewBox="0 0 14 14"><path d="M14 7H2M7 1.500 1.500 7 7 12.500" fill="none" stroke="currentColor" stroke-width="1.700"/></svg></button>
      <button aria-label="Forward" class="flex w-[30px] justify-center text-[#7d2632]"><svg class="size-[14px]" viewBox="0 0 14 14"><path d="M0 7h12M7 1.500 12.500 7 7 12.500" fill="none" stroke="currentColor" stroke-width="1.700"/></svg></button>
      <button aria-label="Reload" class="flex w-[40px] justify-center"><svg class="size-[14px]" viewBox="0 0 14 14"><path d="M12 4.500A5.500 5.500 0 1 0 12.500 8M12.500 1v4h-4" fill="none" stroke="currentColor" stroke-width="1.800"/></svg></button>
      <div class="ml-2 flex h-[34px] flex-1 items-center rounded-full bg-[#832d35] pr-[15px] pl-1">
        <span class="flex size-6 items-center justify-center rounded-full bg-[#9d3442]"><svg class="size-3" viewBox="0 0 12 12"><path d="M6 3h6M0 9h5" stroke="#fff" stroke-width="1.500"/><circle cx="2.500" cy="3" r="1.800" fill="none" stroke="#fff" stroke-width="1.300"/><circle cx="8.500" cy="9" r="1.800" fill="none" stroke="#fff" stroke-width="1.300"/></svg></span>
        <a href="#" class="ml-[7px] text-[13px] text-[#e2c2c6]"><span class="text-white">qbo.intuit.com</span>/app/bill?srcTxnId=226973&amp;srcTxnTypeId=46&amp;nameId=219</a>
        <svg class="ml-auto size-[15px] text-[#e8cfc8]" viewBox="0 0 15 15"><circle cx="6" cy="6" r="4.500" fill="none" stroke="currentColor" stroke-width="1.500"/><path d="M9.500 9.500 14 14M4 6h4" stroke="currentColor" stroke-width="1.700"/></svg>
        <svg class="ml-[18px] size-4 text-[#e8cfc8]" viewBox="0 0 16 16"><path d="M8 1l2 5 5 .5-4 3.500 1.300 5L8 12.200 3.700 15 5 10 1 6.500 6 6z" fill="none" stroke="currentColor" stroke-width="1.400"/></svg>
      </div>
      <svg class="ml-[18px] size-4" viewBox="0 0 16 16"><circle cx="8" cy="8" r="7.500" fill="#b9d5cf"/><path d="M1 8h14M8 1v14M2.500 4.500h11M2.500 11.500h11M8 1Q2 8 8 15M8 1q6 7 0 14" fill="none" stroke="#fff"/></svg>
      <svg class="ml-[22px] size-4" viewBox="0 0 16 16"><path d="M1 3h4q0-2.500 1.500-2.500T8 3h5v4q2.500 0 2.500 1.500T13 10v4H1v-3.500q2 0 2-2t-2-2z" fill="none" stroke="currentColor" stroke-width="1.700"/></svg>
      <span class="mx-[18px] h-4 w-[2px] bg-[#772833]"></span>
      <svg class="size-4" viewBox="0 0 16 16"><circle cx="8" cy="8" r="7" fill="#6a2d70" stroke="#d9a6e0" stroke-width="1.500"/><circle cx="8" cy="6.500" r="2.300" fill="none" stroke="#d9a6e0" stroke-width="1.400"/><path d="M4 12.500q4-3.500 8 0" fill="none" stroke="#d9a6e0" stroke-width="1.400"/></svg>
      <span class="ml-[22px] flex w-4 flex-col items-center gap-[3px]"><i class="size-[3px] rounded-full bg-current"></i><i class="size-[3px] rounded-full bg-current"></i><i class="size-[3px] rounded-full bg-current"></i></span>
    </div>
    <nav class="relative flex h-[35px] items-center border-b border-[#6b2a33] bg-[#a73140] pb-[6px] text-xs whitespace-nowrap text-[#240a0e]" aria-label="Bookmarks">
      <svg class="mr-[15px] ml-[19px] size-[14px]" viewBox="0 0 14 14"><path d="M1 1h4v4H1zM9 1h4v4H9zM1 9h4v4H1zM9 9h4v4H9z" fill="none" stroke="currentColor" stroke-width="1.700"/></svg>
      <span class="mr-[14px] h-4 w-px bg-[#772833]"></span>
      <div id="marks" class="flex flex-1 items-center"></div>
      <span class="text-base font-semibold">»</span>
      <span class="mx-[15px] h-4 w-[2px] bg-[#772833]"></span>
      <a href="#" class="flex items-center gap-2 pr-[14px] text-[11px]"><svg class="size-4" viewBox="0 0 16 16"><path d="M1 3h5l2 2h7v9H1z" fill="none" stroke="#7b4a3d" stroke-width="1.600"/></svg>All Bookmarks</a>
    </nav>
  </header>

  <!-- Bill page -->
  <div class="flex h-[31px] items-center bg-[#f4f5fa] pr-[15px] pl-[18px] text-[#6b6c72]">
    <svg class="mb-1 size-[18px]" viewBox="0 0 18 18"><path d="M3 4.500A7.500 7.500 0 1 1 1.500 10M.5 6.500 2 9.500l3-2M9 5v5h4" fill="none" stroke="currentColor" stroke-width="1.500"/></svg>
    <h1 class="mb-1 ml-[6px] text-[17px] leading-6 font-bold text-[#393a3d]">Bill #US-Q3-25-01063-B</h1>
    <div class="ml-auto flex items-center pt-[2px] text-[11px]">
      <button class="flex items-center gap-[3px]"><svg class="size-[14px]"><use href="#copy"/></svg>Copy</button>
      <button class="ml-[22px] flex items-center gap-1"><svg class="size-[18px]" viewBox="0 0 18 18"><path d="M9 1.500H2v11h3V17l4-4.500h6V10M8 9l1-3 6-5 2 2-6 5.500z" fill="none" stroke="currentColor" stroke-width="1.700"/></svg>Give feedback</button>
      <button aria-label="Settings" class="ml-[24px]"><svg class="size-[19px]"><use href="#gear"/></svg></button>
      <button aria-label="Help" class="ml-[24px]"><svg class="size-[18px]" viewBox="0 0 18 18"><circle cx="9" cy="9" r="8" fill="none" stroke="currentColor" stroke-width="1.500"/><text x="9" y="13" text-anchor="middle" font-family="Open Sans" font-weight="600" font-size="11" fill="currentColor">?</text></svg></button>
      <button aria-label="Close bill" class="ml-[27px]"><svg class="size-[14px]"><use href="#x"/></svg></button>
    </div>
  </div>

  <div class="flex flex-1">
    <div class="flex w-[13px] justify-center border-r border-[#d4d7dc] bg-white pt-[326px]">
      <button aria-label="Assistant" class="relative z-10 ml-[11px] flex size-5 shrink-0 items-center justify-center rounded border border-[#c6cbe0] bg-white"><svg class="size-3" viewBox="0 0 12 12"><path d="M6 1l1.300 2.300L10 2.500 9.300 5l2.200 1.200L9.300 7.500 10 10l-2.700-.6L6 11.500 4.700 9.400 2 10l.7-2.500L.5 6.200 2.700 5 2 2.500l2.700.8z" fill="none" stroke="#4a76d8" stroke-width="1.200"/></svg></button>
    </div>

    <main class="min-w-0 flex-1 font-[Lato,sans-serif] text-[10px] leading-3 text-[#393a3d]">
      <div class="bg-[#f4f5fa] pb-[9px] pl-[18px]">
        <div class="flex gap-[13px]">
          <div class="w-[180px]">
            <label for="addr" class="text-[#6b6c72]">Mailing address</label>
            <div class="mt-[7px] flex h-[78px] rounded-[2px] border border-[#8d9096] bg-white">
              <textarea id="addr" class="min-w-0 flex-1 resize-none overflow-hidden pt-[5px] pl-[5px] leading-[14px] outline-none">Scansource
6 Logue Ct.
Greenville, SC 29615
US</textarea>
              <div class="flex w-4 flex-col items-center py-[5px] text-[#85878c]" aria-hidden="true"><svg class="size-2 rotate-180"><use href="#tri"/></svg><span class="mt-1 h-10 w-[9px] rounded-full bg-[#85878c]"></span><svg class="mt-auto size-2"><use href="#tri"/></svg></div>
            </div>
          </div>
          <div class="w-[124px]">
            <label for="terms" class="text-[#6b6c72]">Terms</label>
            <div class="mt-[7px] mr-[2px] flex h-5 rounded-[2px] border border-[#8d9096] bg-white"><select id="terms" class="flex-1 appearance-none pl-[5px] outline-none"><option>Net 30</option></select><span class="flex w-5 items-center justify-center border-l border-[#8d9096]"><svg class="size-[9px]"><use href="#chev"/></svg></span></div>
          </div>
          <div class="w-[110px]">
            <label for="bdate" class="text-[#6b6c72]">Bill date</label>
            <div class="mt-[7px] flex h-5 items-center rounded-[2px] border border-[#8d9096] bg-white pr-1"><input id="bdate" class="w-full min-w-0 pl-[5px] outline-none" value="07/11/2025"><svg class="size-3"><use href="#cal"/></svg></div>
          </div>
          <div class="w-[110px]">
            <label for="ddate" class="text-[#6b6c72]">Due date</label>
            <div class="mt-[7px] flex h-5 items-center rounded-[2px] border border-[#8d9096] bg-white pr-1"><input id="ddate" class="w-full min-w-0 pl-[5px] outline-none" value="08/10/2025"><svg class="size-3"><use href="#cal"/></svg></div>
          </div>
          <div class="w-[164px]">
            <label for="billno" class="text-[#6b6c72]">Bill no.</label>
            <input id="billno" class="mt-[7px] block h-5 w-[110px] rounded-[2px] border border-[#8d9096] bg-white pl-[5px] outline-none" value="US-Q3-25-01063-B">
            <label for="loc" class="mt-[6px] block text-[#6b6c72]">Location</label>
            <div class="mt-[6px] flex h-[22px] rounded-[2px] border border-[#8d9096] bg-white"><input id="loc" class="w-full min-w-0 pl-[5px] outline-none"><span class="flex w-[22px] items-center justify-center border-l border-[#8d9096]"><svg class="size-[9px]"><use href="#chev"/></svg></span></div>
          </div>
        </div>
        <div class="mt-[13px] w-[501px]">
          <div class="flex justify-between"><span><label for="tags" class="text-[#6b6c72]">Tags</label><a href="#" class="text-[#0077c5] underline">(?)</a></span><a href="#" class="text-[9px] font-bold text-[#055393]">Manage tags</a></div>
          <div class="mt-[2px] h-[45px] rounded-[2px] border border-[#a8abb0] bg-white pt-[3px] pl-[3px]">
            <div id="chips" class="flex gap-[5px] text-[9px]"></div>
            <input id="tags" class="mt-[5px] w-full pl-[4px] placeholder-[#6b6c72] outline-none" placeholder="Start typing to add a tag">
          </div>
        </div>
      </div>

      <div class="pr-[22px] pl-[23px]">
        <div class="flex h-9 items-center justify-between"><h2><button class="flex items-center gap-[5px] text-xs font-semibold"><svg class="size-[10px]"><use href="#chev"/></svg>Category details</button></h2><button aria-label="Category settings" class="mr-[2px] text-[#a5a7ac]"><svg class="size-[13px]"><use href="#gear"/></svg></button></div>
        <table class="mt-[2px] w-full table-fixed border-separate border-spacing-0">
          <colgroup><col class="w-6"><col class="w-[23px]"><col><col class="w-[200px]"><col class="w-[169px]"><col class="w-[204px]"><col class="w-[26px]"><col class="w-[23px]"><col class="w-6"></colgroup>
          <thead><tr class="h-[17px] text-[9px]">
            <th class="border-r border-b border-[#c8c9cd]"></th><th class="border-r border-b border-[#c8c9cd] pr-[2px] text-right">#</th><th class="border-b border-[#c8c9cd] pl-1 text-left font-semibold">CATEGORY</th><th class="border-r border-b border-[#c8c9cd] pr-[2px] text-right font-semibold">AMOUNT</th><th class="border-r border-b border-[#c8c9cd] font-semibold">BILLABLE</th><th class="border-r border-b border-[#c8c9cd] pl-[3px] text-left font-semibold">CUSTOMER</th><th class="border-r border-b border-[#c8c9cd]"></th><th class="border-r border-b border-[#c8c9cd]"></th><th class="border-r border-b border-[#c8c9cd]"></th>
          </tr></thead>
          <tbody id="cats"></tbody>
        </table>
        <div class="mt-[7px] flex gap-[6px] text-[9px] font-semibold"><button class="h-4 w-[67px] rounded-[2px] border border-[#6b6c72]">Add lines</button><button class="h-4 w-[78px] rounded-[2px] border border-[#6b6c72]">Clear all lines</button></div>

        <div class="flex h-[37px] items-center justify-between"><h2><button class="flex items-center gap-[5px] text-xs font-semibold"><svg class="size-[10px]"><use href="#chev"/></svg>Item details</button></h2><button aria-label="Item settings" class="mr-[2px] text-[#a5a7ac]"><svg class="size-[13px]"><use href="#gear"/></svg></button></div>
        <table class="mt-[2px] w-full table-fixed border-separate border-spacing-0">
          <colgroup><col class="w-[21px]"><col class="w-[22px]"><col><col class="w-[150px]"><col class="w-[158px]"><col class="w-[140px]"><col class="w-[169px]"><col class="w-[23px]"><col class="w-6"></colgroup>
          <thead><tr class="h-[18px] text-[9px]">
            <th class="border-r border-b border-[#c8c9cd]"></th><th class="border-r border-b border-[#c8c9cd] pr-[2px] text-right">#</th><th class="border-b border-[#c8c9cd] pl-[3px] text-left font-semibold">PRODUCT/SERVICE</th><th class="border-r border-b border-[#c8c9cd] pr-[2px] text-right font-semibold">RATE</th><th class="border-r border-b border-[#c8c9cd] pr-[2px] text-right font-semibold">AMOUNT</th><th class="border-r border-b border-[#c8c9cd] font-semibold">BILLABLE</th><th class="border-r border-b border-[#c8c9cd] pl-[3px] text-left font-semibold">CUSTOMER</th><th class="border-r border-b border-[#c8c9cd]"></th><th class="border-r border-b border-[#c8c9cd]"></th>
          </tr></thead>
          <tbody id="items"></tbody>
        </table>
        <div class="mt-[6px] flex items-start gap-[6px] text-[9px] font-semibold"><button class="h-4 w-[67px] rounded-[2px] border border-[#6b6c72]">Add lines</button><button class="h-4 w-[78px] rounded-[2px] border border-[#6b6c72]">Clear all lines</button>
          <p class="mt-3 ml-auto flex w-[156px] justify-between text-[11px] leading-4"><span>Total</span><span>$839.20</span></p></div>
        <div class="-ml-[11px] w-[260px] pt-[13px]">
          <label for="memo" class="text-[#6b6c72]">Memo</label>
          <textarea id="memo" class="mt-[6px] block h-[90px] w-full resize-none rounded-[2px] border border-[#8d9096] pt-[7px] pl-[6px] outline-none">US-Q3-25-01063-P</textarea>
        </div>
      </div>
    </main>

    <div class="flex w-[17px] flex-col items-center pt-[7px] pb-[6px]">
      <button aria-label="Open panel" class="flex h-6 w-full items-center justify-center rounded-l-[3px] bg-[#5d6066] text-white"><svg class="size-[10px] rotate-90"><use href="#chev"/></svg></button>
      <span class="mt-[61px] w-2 flex-1 rounded-full bg-[#8c8c8c]"></span>
      <svg class="mt-1 size-2 text-[#777]"><use href="#tri"/></svg>
    </div>
  </div>

  <div class="flex h-10 items-center gap-[2px] border-t border-[#d4d7dc] pr-[7px] pl-[7px] text-[9px] font-bold text-[#108000]">
    <button class="h-[23px] w-[53px] rounded-[2px] border border-[#108043]">Cancel</button>
    <button class="h-[23px] w-[53px] rounded-[2px] border border-[#108043]">Clear</button>
    <button class="ml-auto h-[23px] w-[53px] rounded-[2px] border border-[#108043]">Save</button>
    <button class="ml-[5px] h-[23px] w-[76px] rounded-l-[2px] bg-[#00892e] text-white">Save and close</button>
    <button aria-label="More save options" class="-ml-px flex h-[23px] w-[17px] items-center justify-center rounded-r-[2px] bg-[#00892e] text-white"><svg class="size-2"><use href="#chev"/></svg></button>
  </div>

  <footer class="flex h-10 items-center bg-linear-to-r from-[#e6dcc2] via-[#dcdad2] to-[#e3deb6] pr-[26px]">
    <button aria-label="Start" class="flex w-[49px] justify-center"><svg class="size-4"><use href="#win"/></svg></button>
    <label class="flex h-[38px] w-[342px] items-center bg-white pl-[9px]"><svg class="mr-[9px] size-5"><use href="#glass"/></svg><input aria-label="Search" class="min-w-0 flex-1 text-[13px] placeholder-[#333] outline-none" placeholder="Type here to search"></label>
    <div data-apps class="ml-[3px] flex h-full"></div>
    <div class="ml-auto flex items-center text-[13px]">
      <svg class="h-[22px] w-[21px]" viewBox="0 0 21 22"><path d="M1 10h14M0 14q8 8 18 0l-5-1z" stroke="#e0a52a" stroke-width="2" fill="#f0b840"/><ellipse cx="15" cy="6.500" rx="5.500" ry="6.500" fill="#c6271e"/><path d="M15 3v5M15 9.500v1" stroke="#fff" stroke-width="1.300"/></svg>
      <span class="ml-[8px]">26°C</span><span class="ml-[9px]">Haze</span>
      <svg class="ml-[15px] size-[14px] rotate-180"><use href="#chev"/></svg>
      <svg class="ml-[9px] h-[11px] w-[17px]" viewBox="0 0 17 11"><path d="M4 11a4 4 0 0 1 0-7q3-5 8-2 2 1 2 3 3 1 3 3t-3 3z" fill="#1677d2"/></svg>
      <svg class="ml-[8px] size-4" viewBox="0 0 16 16"><path d="M1 3l11-2h3v11l-3 3H1z" fill="none" stroke="#222" stroke-width="1.200"/><path d="M5 7h5V4H7q-3 5 0 6h2" fill="none" stroke="#222"/><circle cx="13" cy="12.500" r="3.500" fill="#e0241b"/></svg>
      <svg class="ml-2 size-4" viewBox="0 0 16 16"><path d="M5 2h10v8H5M8 10v4M4 14h9M1 1h4v4H1zM3 5v5h3" fill="none" stroke="#222" stroke-width="1.200"/></svg>
      <svg class="ml-2 size-4" viewBox="0 0 16 16"><path d="M1 6h2l4-4v12l-4-4H1zM10 6l4 4M14 6l-4 4" fill="none" stroke="#222" stroke-width="1.200"/></svg>
      <svg class="ml-[12px] size-[18px]"><use href="#pen"/></svg>
      <p class="ml-3 w-[54px] text-center text-[11px] leading-[18px] whitespace-nowrap">9:34 PM<br>7/23/2025</p>
      <svg class="ml-[15px] h-[17px] w-4" viewBox="0 0 16 17"><path d="M0 1h16v11h-4l-4 4v-4H0z" fill="#111"/><path d="M2 4h12M2 6.500h12M2 9h9" stroke="#e3deb6"/><circle cx="13" cy="12" r="3.500" fill="#111" stroke="#e3deb6"/></svg>
    </div>
  </footer>

  <!-- File chooser over the page -->
  <div role="dialog" aria-label="Open" class="absolute top-[346px] left-[163px] z-20 flex w-[650px] flex-col border border-[#2e7fc4] bg-white text-xs shadow-[0_4px_16px_rgba(0,0,0,0.3)]">
    <div class="flex h-[30px] items-center bg-[#0078d7] pr-[10px] pl-2 text-white"><svg class="size-4"><use href="#chrome2"/></svg><span class="ml-[6px]">Open</span><button aria-label="Close dialog" class="ml-auto"><svg class="size-[11px]"><use href="#x"/></svg></button></div>
    <div class="flex h-[42px] items-center pr-3 pl-[13px] text-[#555]">
      <button aria-label="Back" class="text-[#c4c4c4]"><svg class="size-3" viewBox="0 0 14 14"><path d="M14 7H2M7 1.500 1.500 7 7 12.500" fill="none" stroke="currentColor" stroke-width="1.500"/></svg></button>
      <button aria-label="Forward" class="ml-[17px] text-[#c4c4c4]"><svg class="size-3" viewBox="0 0 14 14"><path d="M0 7h12M7 1.500 12.500 7 7 12.500" fill="none" stroke="currentColor" stroke-width="1.500"/></svg></button>
      <svg class="ml-[14px] size-[7px] text-[#c4c4c4]"><use href="#chev"/></svg>
      <button aria-label="Up" class="ml-[11px]"><svg class="size-[13px]" viewBox="0 0 14 14"><path d="M7 14V2M2 7l5-5 5 5" fill="none" stroke="currentColor" stroke-width="1.700"/></svg></button>
      <div class="ml-[7px] flex h-[29px] w-[316px] items-center border border-[#d9d9d9] pl-[3px] text-[#222]"><svg class="h-4 w-[14px]"><use href="#fold"/></svg><span class="ml-[6px]">«</span><button class="ml-[8px]">Desk...</button><svg class="mx-[7px] size-2 -rotate-90"><use href="#chev"/></svg><button>Attachments July 14...</button><svg class="mr-[11px] ml-auto size-[9px]"><use href="#chev"/></svg><button aria-label="Refresh" class="flex h-full w-[33px] items-center justify-center border-l border-[#d9d9d9]"><svg class="size-[11px]" viewBox="0 0 12 12"><path d="M9.500 3A4.500 4.500 0 1 1 5 1.500M2 .5h4v4" fill="none" stroke="#555" stroke-width="1.400"/></svg></button></div>
      <label class="ml-3 flex h-[29px] flex-1 items-center border border-[#d9d9d9] pl-[13px]"><svg class="size-[14px] shrink-0 text-[#777]"><use href="#glass"/></svg><input aria-label="Search folder" class="ml-3 min-w-0 flex-1 text-[11px] placeholder-[#6d6d6d] outline-none" placeholder="Search Attachments July 14-..."></label>
    </div>
    <div class="flex h-[30px] items-center bg-[#f5f6f7] pr-[15px] pl-[18px] text-[#1e395b]">
      <button>Organize<svg class="ml-1 inline size-2"><use href="#tri"/></svg></button><button class="ml-[29px]">New folder</button>
      <button aria-label="View" class="ml-auto flex items-center gap-[9px]"><svg class="size-4" viewBox="0 0 16 16"><path d="M.5.5h5v15h-5zM.5 5h5M.5 10h5M7 2h3M12 2h4M7 7h3M12 7h4M7 13h3M12 13h4" fill="none" stroke="#777"/></svg><svg class="size-2"><use href="#tri"/></svg></button>
      <button aria-label="Preview pane" class="ml-[21px]"><svg class="h-3 w-4" viewBox="0 0 16 12"><path d="M.5.5h15v11H.5z" fill="#fff" stroke="#888"/><path d="M9 1h6v10H9z" fill="#4aa3e0"/></svg></button>
      <button aria-label="Help" class="ml-[20px] flex size-4 items-center justify-center rounded-full bg-[#0a5fb4] text-[11px] font-bold text-white">?</button>
    </div>
    <div class="flex h-[323px]">
      <ul id="nav" class="w-[139px] shrink-0 overflow-hidden pt-px text-[11px] text-black"></ul>
      <div class="flex w-4 shrink-0 flex-col items-center bg-[#f0f0f0] py-[5px] text-[#444]" aria-hidden="true"><svg class="size-[10px] rotate-180"><use href="#chev"/></svg><span class="mt-[176px] h-[109px] w-4 bg-[#cdcdcd]"></span><svg class="mt-[10px] size-[10px]"><use href="#chev"/></svg></div>
      <div class="flex min-w-0 flex-1 flex-col pl-[3px]">
        <div class="flex min-h-0 flex-1">
          <table class="h-fit min-w-0 flex-1 table-fixed border-separate border-spacing-0 text-[#6d6d6d]">
            <colgroup><col class="w-[274px]"><col class="w-[144px]"><col class="w-[56px]"></colgroup>
            <thead><tr class="h-[32px] text-[#44546f]"><th class="relative pb-1 pl-[19px] text-left font-normal">Name<svg class="absolute top-0 left-[139px] size-2 rotate-180 text-[#888]"><use href="#chev"/></svg></th><th class="border-l border-[#e5e5e5] pb-1 pl-[6px] text-left font-normal">Date modified</th><th class="border-l border-[#e5e5e5] pb-1 pl-[6px] text-left font-normal">Type</th></tr></thead>
            <tbody id="files"></tbody>
          </table>
          <div class="flex w-4 flex-col items-center bg-[#f0f0f0] pt-[5px] text-[#444]" aria-hidden="true"><svg class="size-[10px] shrink-0 rotate-180"><use href="#chev"/></svg><span class="mt-1 h-[17px] w-[15px] bg-[#cdcdcd]"></span><svg class="mt-auto mb-1 size-[10px] shrink-0"><use href="#chev"/></svg></div>
        </div>
        <div class="mr-4 flex h-[15px] items-center bg-[#f0f0f0] px-1 text-[#444]" aria-hidden="true"><svg class="size-[10px] rotate-90"><use href="#chev"/></svg><span class="ml-[5px] h-full w-[329px] bg-[#cdcdcd]"></span><svg class="ml-auto size-[10px] -rotate-90"><use href="#chev"/></svg></div>
      </div>
    </div>
    <div class="h-[76px] bg-[#f0f0f0] pt-[9px] pr-[18px] text-black">
      <div class="flex h-6 items-center justify-end"><label for="fname" class="mr-[6px]">File <u>n</u>ame:</label><div class="flex h-6 w-[241px] items-center border border-[#0a64ad] bg-white pr-1"><input id="fname" class="min-w-0 flex-1 pl-[3px] outline-none" value="US-Q3-25-01063-B"><svg class="size-[9px]"><use href="#chev"/></svg></div>
        <div class="ml-3 flex h-[23px] w-[188px] items-center border border-[#adadad] bg-[#e1e1e1] pr-1"><select aria-label="File type" class="flex-1 appearance-none pl-[3px] outline-none"><option>All Files</option></select><svg class="size-[9px]"><use href="#chev"/></svg></div></div>
      <div class="mt-[6px] flex justify-end gap-[14px]"><button class="h-6 w-[86px] border-2 border-[#0078d7] bg-[#e1e1e1]"><u>O</u>pen</button><button class="h-6 w-[86px] border border-[#adadad] bg-[#e1e1e1]">Cancel</button></div>
    </div>
  </div>
</section>
</div>

<script>
const $ = id => document.getElementById(id);

// Spreadsheet
$('cols').innerHTML = ['', 'A', 'B', 'C', 'D', '', 'F', 'G', 'H', 'I', 'J', 'K', 'L', 'M', 'N', 'O', '', 'AD', '']
  .map((c, i) => i ? `<th class="border-r border-b border-[#a8a8a8] p-0 font-normal">${c}</th>`
    : '<th class="border-r border-b border-[#a8a8a8] p-0"><svg class="ml-[10px] size-3" viewBox="0 0 12 12"><path d="M12 0v12H0z" fill="#b5b5b5"/></svg></th>').join('');
const sheet = `22|38|EUREKA-CA|Chris Hunt|6.7|5|0|11.7|ok
23|45|BROOKVILLE-PA|thomas d .|9.32|0|0|9.32|
24|49|DALLAS-TX|Mark H. Fox|44.09|0|0|44.09|
25|51|ROCKWALL-TX|MB SIMISON|5.23|0|0|5.23|
26|52|SOUTHAVEN-MS|Lisa Deptula|9.32|0|0|9.32|
27|54|Douglasville-GA|Recipient'W|396.6|0|1.5|398.1|
29|58|STRUTHERS-OH|Brenda Rose|15.15|0|0|15.15|
30|60|SALISBURY MILLS-NY|Yasmin Estes|9.32|0|0|9.32|
31|61|HIXSON-TN|MELISSA HA|50|0|0|50|
32|63|SANTA CLARA-CA|Ken Wold2|839.2|0|4|843.2|
34|67|BALDWIN CITY-KS|Erin Jackson|3.72|0|0|3.72|
36|69|PRINCETON-TX|RecipientN|3.48|0|0|3.48|
38|72|PORT HURON-MI|Dennis Sava|55.32|0|0|55.32|ok
39|74|LILLINGTON-NC|Alexander P|50|0|0|50|
51|88|CHICAGO-IL|Georgette B|27.09|0|0|27.09|
52|89|*Ubiquiti-SOUTH BEND-IN|Cindy Pedro|10.1|5|0|15.1|
54|91|AMHERST-OH|robert balla|4.34|0|0|4.34|
55|96|ANNANDALE-MN|Mark S Johns|9.32|0|0|9.32|
73|134|Hamilton-GA|Chris L Ring|22.72|0|0|22.72|ok
75|136|DUNDEE-OR|Maria Tang|28.98|0|0|28.98|
76|138|BEAUMONT-CA|Gabriel Gom|54.79|0|0|54.79|
77|139|MAMARONECK-NY|Ro Desaque|13.55|0|0|13.55|
106|189|Chatham-NJ|Christine C|9.32|0|0|9.32|`.split('\n').map(r => r.split('|'));
const L = 'overflow-hidden bg-[#f1f1f1] p-0 pl-[3px] whitespace-nowrap';
const R = 'bg-[#f1f1f1] p-0 pr-[3px] text-right';
const W = 'border-b border-[#d4d4d4] bg-white p-0 pr-[3px] text-right';
$('rows').innerHTML = sheet.map(([n, id, g, h, i, j, l, t, ok]) => `<tr class="h-5">
<th class="border-r border-b border-[#b4b4b4] bg-[#e6e6e6] p-0 font-normal text-[#2f35c4]">${n}</th>
<td class="${L} pl-[5px]">07/11/2025</td><td class="${L}">vCloud Choice</td><td class="${L}">C2C</td><td class="${L}">US-Q3-25-01${id.padStart(3, '0')}-P</td><td class="${L}"></td><td class="${L}">Scansource Choice</td>
<td class="${L}">${g[0] === '*' ? g.slice(1) : '&nbsp;Tripp Lite -' + g}</td><td class="${L}">${h}</td><td class="${R}">${i}</td><td class="${R}">${j}</td><td class="${R}">0</td><td class="${W}">${l}</td><td class="${R}">0</td><td class="${W}">${t}</td><td class="${L}">${ok}</td><td class="${L}"></td>
<td class="border-r border-b border-[#d4d4d4] bg-white p-0"></td><td class="border-b border-[#d4d4d4] bg-white p-0"></td></tr>`).join('');

// Taskbar applications
document.querySelectorAll('[data-apps]').forEach(el => {
  el.innerHTML = [['chrome', 'Chrome'], ['outlook', 'Outlook'], ['edge', 'Edge'], ['excel', 'Excel'], ['chrome2', 'Chrome profile'], ['notes', 'Sticky Notes'], ['calc', 'Calculator'], ['folder', 'File Explorer'], ['zoomapp', 'Zoom']]
    .map(([s, n]) => `<button aria-label="${n}" class="flex h-full items-center justify-center ${s === 'chrome2' ? 'w-[49px] border-b-[3px] border-[#0a6cc0] bg-[#f7f0e6] pt-[3px]' : s === 'excel' ? 'mx-[4px] w-[41px] border-b-[3px] border-[#0a6cc0] pt-[3px]' : 'w-[49px]'}"><svg class="size-[23px]"><use href="#${s}"/></svg></button>`).join('');
});

// Browser tabs
const fav = {
  person: '<svg class="size-4" viewBox="0 0 16 16"><circle cx="8" cy="4" r="3" fill="none" stroke="#1b1b1b" stroke-width="1.500"/><path d="M6 6 2 13q-1 2 2 2h8q3 0 2-3t-3-1l-1 3" fill="none" stroke="#d2763c" stroke-width="1.500"/></svg>',
  dh: '<svg class="size-4" viewBox="0 0 16 16"><path d="M0 0h16v16H0z" fill="#d8001f"/><text x="8" y="13" text-anchor="middle" font-family="Open Sans" font-weight="700" font-size="6" fill="#fff">D&amp;H</text></svg>',
  globe: '<svg class="size-4" viewBox="0 0 16 16"><circle cx="8" cy="8" r="7" fill="#77686d"/><path d="M3 5q4 0 3 3t3 2l1 4M9 2q-1 3 2 3l3 2" fill="none" stroke="#54434a" stroke-width="2"/></svg>',
  qb: '<svg class="size-[18px]" viewBox="0 0 18 18"><circle cx="9" cy="9" r="9" fill="#2ca01c"/><circle cx="6.200" cy="9" r="2.200" fill="none" stroke="#fff" stroke-width="1.300"/><circle cx="11.800" cy="9" r="2.200" fill="none" stroke="#fff" stroke-width="1.300"/><path d="M8.300 6.500v7M9.700 11.500v-7" stroke="#fff" stroke-width="1.200"/></svg>'
};
const icon = s => fav[s] || `<svg class="size-4 shrink-0"><use href="#${s}"/></svg>`;
$('tabs').innerHTML = ['hex', 'tridisc', 'person', 'tridisc', 'amazon', 'ec', 'dh', 'ec', 'globe', 'gg', 'qb'].map(s => s === 'qb'
  ? `<button aria-label="QuickBooks tab" class="flex h-[34px] w-[46px] items-center justify-center rounded-t-xl bg-[#b52c40] pb-[6px]">${icon(s)}</button>`
  : `<button aria-label="Tab ${s}" class="mb-[5px] flex h-[26px] w-[46px] items-center justify-center border-r-2 border-[#7a3a46]"><span class="flex h-[26px] w-[38px] items-center justify-center rounded-[10px] bg-[#54434a]">${icon(s)}</span></button>`).join('');

// Bookmarks
fav.u = '<svg class="size-4" viewBox="0 0 16 16"><circle cx="8" cy="8" r="8" fill="#8a2fe0"/><path d="M5 6v4q0 2.500 3 2.500t3-2.500V6M6 4l2-1.500L10 4" fill="none" stroke="#fff" stroke-width="1.500"/></svg>';
fav.asi = '<svg class="size-4" viewBox="0 0 16 16"><path d="M5 1h4l7 7-7 7H5l4-7z" fill="#1c4fa0"/><circle cx="3" cy="8" r="3" fill="#ffb81c"/></svg>';
fav.w = '<svg class="size-4" viewBox="0 0 16 16"><path d="M0 0h16v16H0z" fill="#f7b500"/><path d="M3 5l2 7 3-6 3 6 2-7" fill="none" stroke="#fff" stroke-width="1.800"/></svg>';
fav.i = '<svg class="size-4" viewBox="0 0 16 16"><path d="M0 0h16v16H0z" fill="#236cff"/><path d="M8 4v8" stroke="#fff" stroke-width="2.500"/></svg>';
$('marks').innerHTML = [['u', 'Power BI Financial R...', 'w-[153px]'], ['asi', 'ASI Partner Access', 'w-[137px]'], ['amazon', 'Amazon', 'w-[82px]'], ['tridisc', 'Employee Dashboar...', 'w-[154px]'], ['w', 'Dashboard | Comta...', 'w-[153px]'], ['gg', 'Orders', 'w-[75px]'], ['ec', 'Welcome- ECExpres...', 'w-[154px]'], ['i', 'QuickBooks', 'w-[101px]'], ['hex', 'Dashboard', 'w-[90px]']]
  .map(([s, t, w]) => `<a href="#" class="flex items-center gap-[6px] text-[11px] ${w}">${icon(s)}${t}</a>`).join('');

// Tag chips
$('chips').innerHTML = [['Purchases (As per product): ', 'TRIPPLITE', 'border-[#ff9c5b]', 'w-[173px]'], ['Sales (as per states): ', 'CA', 'border-[#2ca01c]', 'w-[120px]'], ['Purchases (As per vendors): ', 'Scansource', 'border-[#f5b800]', 'w-[180px]']]
  .map(([a, b, c, w]) => `<span class="flex h-[14px] items-center justify-between rounded-[2px] border-l-[5px] bg-[#efeff0] pr-[5px] pl-[5px] whitespace-nowrap ${c} ${w}"><span>${a}<b class="font-semibold">${b}</b></span><button aria-label="Remove tag"><svg class="size-2"><use href="#x"/></svg></button></span>`).join('');

// Bill tables
const bd = 'border-b border-[#c8c9cd] p-0 border-r [border-right-style:dotted]';
const tools = '<td class="border-r border-b border-[#c8c9cd] p-0 text-[#a5a7ac] [border-right-style:dotted]"><button aria-label="Copy line" class="block w-full"><svg class="mx-auto size-3"><use href="#copy"/></svg></button></td><td class="border-r border-b border-[#c8c9cd] p-0 text-[#a5a7ac] [border-right-style:dotted]"><button aria-label="Delete line" class="block w-full"><svg class="ml-[3px] h-[14px] w-3"><use href="#trash"/></svg></button></td>';
const lead = n => `<td class="${bd}"><svg class="ml-2 h-[10px] w-[9px]"><use href="#dots"/></svg></td><td class="${bd} pr-[2px] text-right">${n}</td>`;
$('cats').innerHTML = [['Cost of Goods Sold', '$839.20'], ['Outbound Shipping', '$0.00'], ['Product Handling', '$0.00'], ['', '']]
  .map(([c, a], i) => `<tr class="h-[29px]">${lead(i + 1)}<td class="border-b border-[#c8c9cd] p-0 pl-[6px]">${c}</td><td class="${bd} pr-[2px] text-right">${a}</td><td class="${bd}"></td><td class="${bd}"></td><td class="${bd} text-[#a5a7ac]">${a ? '<svg class="mx-auto size-[11px]"><use href="#link"/></svg>' : ''}</td>${tools}</tr>`).join('');
$('items').innerHTML = [1, 2].map(n => `<tr class="h-[29px]">${lead(n)}<td class="border-b border-[#c8c9cd] p-0"></td><td class="${bd}"></td><td class="${bd}"></td><td class="${bd}"></td><td class="${bd}"></td>${tools}</tr>`).join('');

// File chooser
$('nav').innerHTML = [['fold', 'Zain', 1], ['zip', 'ASI Oct 2-6 2023', 1], ['pc', 'This PC', 0], ['cube', '3D Objects', 1], ['desk', 'Desktop', 1], ['doc', 'Documents', 1], ['down', 'Downloads', 1], ['note', 'Music', 1], ['pic', 'Pictures', 1], ['film', 'Videos', 1], ['diskc', 'Local Disk (C:)', 1], ['disk', 'Local Disk (D:)', 1], ['net', 'Network', 0]]
  .map(([s, t, d]) => `<li class="flex h-6 items-center gap-[5px] whitespace-nowrap ${d ? 'pl-8' : 'mt-2 pl-6'} ${t === 'Desktop' ? 'bg-[#d9d9d9]' : ''}"><svg class="size-4 shrink-0"><use href="#${s}"/></svg>${t}</li>`).join('');
$('files').innerHTML = [['00994', '7/21/2025 8:25 PM'], ['00996', '7/21/2025 8:26 PM'], ['00997', '7/21/2025 8:26 PM'], ['01000', '7/21/2025 8:27 PM'], ['01002', '7/21/2025 8:27 PM'], ['01004', '7/21/2025 8:27 PM'], ['01007', '7/22/2025 1:05 AM'], ['01009', '7/21/2025 8:28 PM'], ['01010', '7/21/2025 8:28 PM'], ['01011', '7/21/2025 8:28 PM'], ['01012', '7/21/2025 8:29 PM'], ['01013', '7/22/2025 2:05 AM'], ['01014', '7/22/2025 11:14 PM']]
  .map(([n, d]) => `<tr class="h-[21px] ${n === '01013' ? 'bg-[#e5f3ff]' : ''}"><td class="p-0 pl-[19px] text-black"><span class="flex items-center gap-[5px]"><svg class="h-[17px] w-4"><use href="#pdf"/></svg>US-Q3-25-${n}-P</span></td><td class="p-0 pl-[7px]">${d}</td><td class="overflow-hidden p-0 pl-[7px]">Microsoft</td></tr>`).join('');
</script>
</body>
</html>
